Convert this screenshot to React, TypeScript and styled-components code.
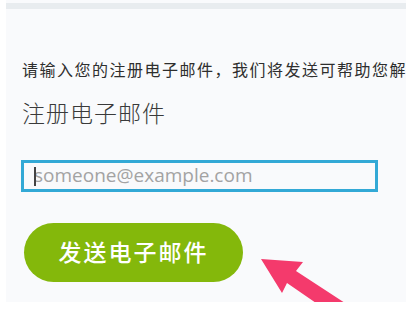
import styled, { createGlobalStyle } from "styled-components";

const GlobalStyle = createGlobalStyle`
  html, body {
    margin: 0;
    padding: 0;
    background: #ffffff;
  }
  body {
    font-family: "Noto Sans CJK SC", "Noto Sans", sans-serif;
  }
`;

function App() {
  return (
    <>
      <GlobalStyle />
      <Page>
        <Panel>
          <TopStrip />
          <Content>
            <Description>
              请输入您的注册电子邮件，我们将发送可帮助您解锁帐户的电子邮件。
            </Description>
            <Label>注册电子邮件</Label>
            <Field>
              <EmailInput placeholder="someone@example.com" />
              <Caret />
            </Field>
            <SendButton>发送电子邮件</SendButton>
          </Content>
          <Pointer viewBox="0 0 100 50" aria-hidden="true">
            <path d="M0 0 L42 3 L35 12 L84 44 L55 44 L26 24 L21 34 Z" fill="#f43a6c" />
          </Pointer>
        </Panel>
      </Page>
    </>
  );
}

const Page = styled.div`
  width: 419px;
  height: 309px;
  padding-left: 6px;
  box-sizing: border-box;
`;

const Panel = styled.div`
  position: relative;
  width: 400px;
  height: 302px;
  background: #f9fafc;
  overflow: hidden;
  padding-top: 3px;
  box-sizing: border-box;
`;

const TopStrip = styled.div`
  height: 6px;
  background: #e8ecef;
`;

const Content = styled.div`
  display: flex;
  flex-direction: column;
  align-items: flex-start;
  padding: 49px 0 0 16px;
`;

const Description = styled.p`
  margin: 0;
  font-size: 16px;
  line-height: 22px;
  letter-spacing: 1.5px;
  color: #2e2e2e;
  white-space: nowrap;
`;

const Label = styled.h2`
  margin: 17px 0 0;
  font-size: 23px;
  line-height: 30px;
  font-weight: 300;
  letter-spacing: 1px;
  color: #3a3a3a;
`;

const Field = styled.div`
  position: relative;
  margin: 33px 0 0 -1px;
`;

const EmailInput = styled.input`
  display: block;
  width: 357px;
  height: 32px;
  box-sizing: border-box;
  border: 3px solid #33a9d6;
  background: #f9fafc;
  padding: 0 0 2px 10px;
  font-family: "Open Sans", "Noto Sans", sans-serif;
  font-size: 19px;
  color: #333333;
  outline: none;
  &::placeholder {
    color: #a3a3a3;
  }
`;

const Caret = styled.span`
  position: absolute;
  left: 13px;
  top: 7px;
  width: 1.5px;
  height: 19px;
  background: #444444;
`;

const SendButton = styled.button`
  margin: 31px 0 0 2px;
  width: 219px;
  height: 59px;
  border: none;
  border-radius: 30px;
  background: #84b80b;
  color: #ffffff;
  font-family: "Noto Sans CJK SC", "Noto Sans", sans-serif;
  font-size: 23px;
  font-weight: 500;
  letter-spacing: 2px;
  padding: 0 0 4px;
  cursor: pointer;
`;

const Pointer = styled.svg`
  position: absolute;
  left: 255px;
  top: 259px;
  width: 100px;
  height: 50px;
`;

export default App;
